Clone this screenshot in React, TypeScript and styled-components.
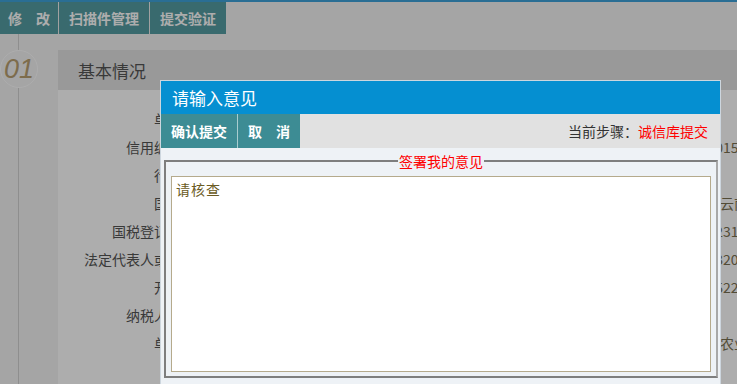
import React, { ReactElement } from "react";
import styled, { createGlobalStyle } from "styled-components";

const GlobalStyle = createGlobalStyle`
  html, body {
    margin: 0;
    padding: 0;
    width: 737px;
    height: 384px;
    overflow: hidden;
    background: #f3f3f4;
    font-family: "Noto Sans CJK SC", "Noto Sans", sans-serif;
  }
`;

const TopBar = styled.div`
  display: flex;
  height: 32px;
  border-top: 2px solid #3ea3db;
  background: #f4f4f4;
`;

const TopButton = styled.div<{ pad?: number }>`
  display: flex;
  align-items: center;
  padding: 0 ${(p) => p.pad ?? 10}px;
  background: #559ca2;
  color: #fff;
  font-size: 14px;
  font-weight: bold;
  & + & {
    border-left: 1px solid #eeeeee;
  }
`;

const Main = styled.div`
  display: flex;
  height: 350px;
`;

const Timeline = styled.div`
  position: relative;
  width: 58px;
  flex: none;
  display: flex;
  flex-direction: column;
  &::before {
    content: "";
    position: absolute;
    left: 18px;
    top: 0;
    bottom: 0;
    width: 1px;
    background: #d2d2d2;
  }
`;

const StepBadge = styled.div`
  position: relative;
  margin-top: 16px;
  width: 36px;
  height: 36px;
  border: 1px solid #ffffff;
  border-radius: 50%;
  background: #f3f3f4;
  display: flex;
  align-items: center;
  justify-content: center;
  color: #b8a071;
  font-family: "Liberation Sans", Arial, sans-serif;
  font-style: italic;
  font-size: 27px;
`;

const Panel = styled.div`
  flex: 1;
  margin-top: 16px;
  background: #ffffff;
`;

const PanelHeader = styled.div`
  height: 40px;
  display: flex;
  align-items: center;
  padding-left: 20px;
  background: #e2e2e2;
  color: #555555;
  font-size: 17px;
`;

const FormGrid = styled.div`
  display: grid;
  grid-template-columns: 138px 1fr;
  grid-auto-rows: 28px;
  padding-top: 15px;
  font-size: 14px;
  white-space: nowrap;
`;

const Label = styled.div`
  display: flex;
  align-items: center;
  justify-content: flex-end;
  color: #555555;
`;

const Value = styled.div`
  display: flex;
  align-items: center;
  padding-left: 496px;
  color: #7a7152;
`;

const Mask = styled.div`
  position: fixed;
  inset: 0;
  background: rgba(0, 0, 0, 0.32);
`;

const Dialog = styled.div`
  position: fixed;
  left: 160px;
  top: 80px;
  width: 559px;
  height: 330px;
  border: 1px solid #cdd6de;
  background: #eef2f6;
  display: flex;
  flex-direction: column;
`;

const DialogTitle = styled.div`
  height: 33px;
  display: flex;
  align-items: center;
  padding-left: 11px;
  background: #058fd1;
  color: #ffffff;
  font-size: 17px;
`;

const DialogBar = styled.div`
  height: 34px;
  display: flex;
  align-items: stretch;
  background: #e1e1e1;
`;

const ActionButton = styled.div`
  display: flex;
  align-items: center;
  padding: 0 10px;
  background: #3d8c94;
  color: #ffffff;
  font-size: 14px;
  font-weight: bold;
  & + & {
    border-left: 1px solid #a9cdd0;
  }
`;

const StepInfo = styled.div`
  margin-left: auto;
  padding-right: 12px;
  display: flex;
  align-items: center;
  font-size: 14px;
  color: #333333;
  span {
    color: #ff0000;
  }
`;

const Opinion = styled.fieldset`
  margin: 3px 2px 0 3px;
  padding: 5px 5px 4px 5px;
  border: 2px solid #7e7e7e;
  border-color: #7e7e7e #a8a8a8 #7e7e7e #7e7e7e;
  min-width: 0;
`;

const OpinionLegend = styled.legend`
  margin: 0 auto;
  padding: 0 1px;
  color: #ff0000;
  font-size: 14px;
  line-height: 20px;
`;

const OpinionText = styled.textarea`
  display: block;
  box-sizing: border-box;
  width: 540px;
  height: 196px;
  margin: 0;
  padding: 2px 4px;
  border: 1px solid #b5aa8c;
  background: #ffffff;
  resize: none;
  outline: none;
  color: #6b5b23;
  font-family: "Noto Sans CJK SC", sans-serif;
  font-size: 14px;
  letter-spacing: 1px;
  line-height: 20px;
`;

const rows: [string, string][] = [
  ["单位：", ""],
  ["信用编码：", "530015789"],
  ["行业：", ""],
  ["国别：", "中国云南省"],
  ["国税登记号：", "871231456"],
  ["法定代表人或者：", "530320198"],
  ["开户：", "622522301"],
  ["纳税人号：", ""],
  ["单位：", "种植农业类"],
];

export default function App(): ReactElement {
  return (
    <>
      <GlobalStyle />
      <TopBar>
        <TopButton pad={8}>修　改</TopButton>
        <TopButton pad={10}>扫描件管理</TopButton>
        <TopButton pad={10}>提交验证</TopButton>
      </TopBar>
      <Main>
        <Timeline>
          <StepBadge>01</StepBadge>
        </Timeline>
        <Panel>
          <PanelHeader>基本情况</PanelHeader>
          <FormGrid>
            {rows.map(([label, value], i) => (
              <React.Fragment key={i}>
                <Label>{label}</Label>
                <Value>{value}</Value>
              </React.Fragment>
            ))}
          </FormGrid>
        </Panel>
      </Main>
      <Mask />
      <Dialog>
        <DialogTitle>请输入意见</DialogTitle>
        <DialogBar>
          <ActionButton>确认提交</ActionButton>
          <ActionButton>取　消</ActionButton>
          <StepInfo>
            当前步骤：<span>诚信库提交</span>
          </StepInfo>
        </DialogBar>
        <Opinion>
          <OpinionLegend>签署我的意见</OpinionLegend>
          <OpinionText defaultValue="请核查" />
        </Opinion>
      </Dialog>
    </>
  );
}
